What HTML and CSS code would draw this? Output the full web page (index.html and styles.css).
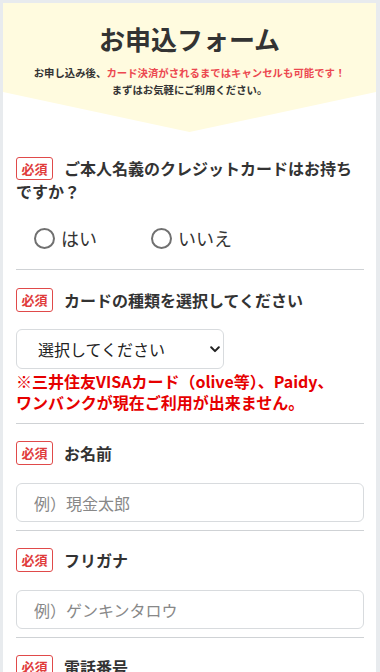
FILE: index.html
```html
<!DOCTYPE html>
<html lang="ja">
<head>
<meta charset="utf-8">
<title>お申込フォーム</title>
<link rel="stylesheet" href="styles.css">
</head>
<body>
<div class="card">
  <header class="hero">
    <h1 class="hero-title">お申込フォーム</h1>
    <p class="hero-sub">お申し込み後、<span class="hero-red">カード決済がされるまではキャンセルも可能です！</span><br>まずはお気軽にご利用ください。</p>
  </header>

  <section class="field field-first">
    <div class="label label-multi"><span class="badge">必須</span>ご本人名義のクレジットカードはお持ちですか？</div>
    <div class="radios">
      <label class="radio"><input type="radio" name="own"><span>はい</span></label>
      <label class="radio"><input type="radio" name="own"><span>いいえ</span></label>
    </div>
  </section>

  <section class="field field-select">
    <div class="label"><span class="badge">必須</span>カードの種類を選択してください</div>
    <div class="select-wrap">
      <select class="select">
        <option>選択してください</option>
      </select>
      <svg class="chev" width="10" height="7" viewBox="0 0 10 7"><path d="M1.2 1.3 L5 5.1 L8.8 1.3" fill="none" stroke="#222" stroke-width="2" stroke-linecap="round" stroke-linejoin="round"/></svg>
    </div>
    <p class="note">※三井住友VISAカード（olive等）、Paidy、<br>ワンバンクが現在ご利用が出来ません。</p>
  </section>

  <section class="field">
    <div class="label"><span class="badge">必須</span>お名前</div>
    <input class="text" type="text" placeholder="例）現金太郎">
  </section>

  <section class="field">
    <div class="label"><span class="badge">必須</span>フリガナ</div>
    <input class="text" type="text" placeholder="例）ゲンキンタロウ">
  </section>

  <section class="field">
    <div class="label"><span class="badge">必須</span>電話番号</div>
    <input class="text" type="tel" placeholder="例）09012345678">
  </section>
</div>
</body>
</html>
```
FILE: styles.css
```css
* { box-sizing: border-box; }
html, body { margin: 0; padding: 0; }
body {
  background: #e8ebee;
  font-family: "Noto Sans CJK JP", "Noto Sans", sans-serif;
  color: #333;
}
.card {
  background: #fff;
  margin: 3px 4px 0 3px;
  padding-bottom: 40px;
}
.hero {
  background: #fffbdf;
  height: 129px;
  clip-path: polygon(0 0, 100% 0, 100% 89px, 50% 129px, 0 89px);
  text-align: center;
  padding-top: 16px;
}
.hero-title {
  margin: 0;
  font-size: 26px;
  line-height: 40px;
  font-weight: 700;
  color: #333;
}
.hero-sub {
  margin: 5px 0 0;
  font-size: 10.4px;
  line-height: 17px;
  font-weight: 700;
  color: #333;
}
.hero-red { color: #ec4850; }

.field {
  margin: 0 12px 0 13px;
  padding: 17px 0 8px;
  border-bottom: 1px solid #cfd2d5;
}
.field-first { padding-top: 25px; padding-bottom: 16px; }
.field-select { padding-top: 18px; padding-bottom: 10px; }

.label {
  font-size: 16px;
  font-weight: 700;
  line-height: 24px;
  color: #333;
}
.label-multi { line-height: 23px; }
.badge {
  display: inline-block;
  width: 37px;
  height: 24px;
  border: 1px solid #e04a4a;
  border-radius: 3px;
  color: #e03c3c;
  font-size: 13px;
  font-weight: 700;
  line-height: 22px;
  text-align: center;
  margin-right: 11px;
  vertical-align: top;
}
.label-multi .badge { height: 23px; line-height: 21px; }

.radios {
  display: flex;
  padding: 20px 0 0 18px;
}
.radio {
  display: flex;
  align-items: center;
  gap: 6px;
  font-size: 18px;
  line-height: 30px;
  color: #333;
  margin-right: 54px;
}
.radio input {
  appearance: none;
  -webkit-appearance: none;
  margin: 0;
  width: 21px;
  height: 21px;
  border: 2px solid #707070;
  border-radius: 50%;
  background: #fff;
}

.select-wrap {
  position: relative;
  width: 208px;
  margin-top: 17px;
}
.select {
  appearance: none;
  -webkit-appearance: none;
  display: block;
  width: 208px;
  height: 40px;
  border: 1px solid #d8dbde;
  border-radius: 6px;
  background: #fff;
  padding: 0 0 0 21px;
  font-family: inherit;
  font-size: 16px;
  color: #222;
}
.chev {
  position: absolute;
  right: 4px;
  top: 17px;
}
.note {
  margin: 2px 0 0;
  color: #e60000;
  font-size: 16px;
  font-weight: 700;
  line-height: 21px;
}

.text {
  display: block;
  width: 100%;
  height: 39px;
  margin: 18px 0 0;
  border: 1px solid #d8dbde;
  border-radius: 6px;
  padding: 0 17px;
  font-family: inherit;
  font-size: 16px;
  color: #333;
  background: #fff;
}
.text::placeholder { color: #888; }
```
